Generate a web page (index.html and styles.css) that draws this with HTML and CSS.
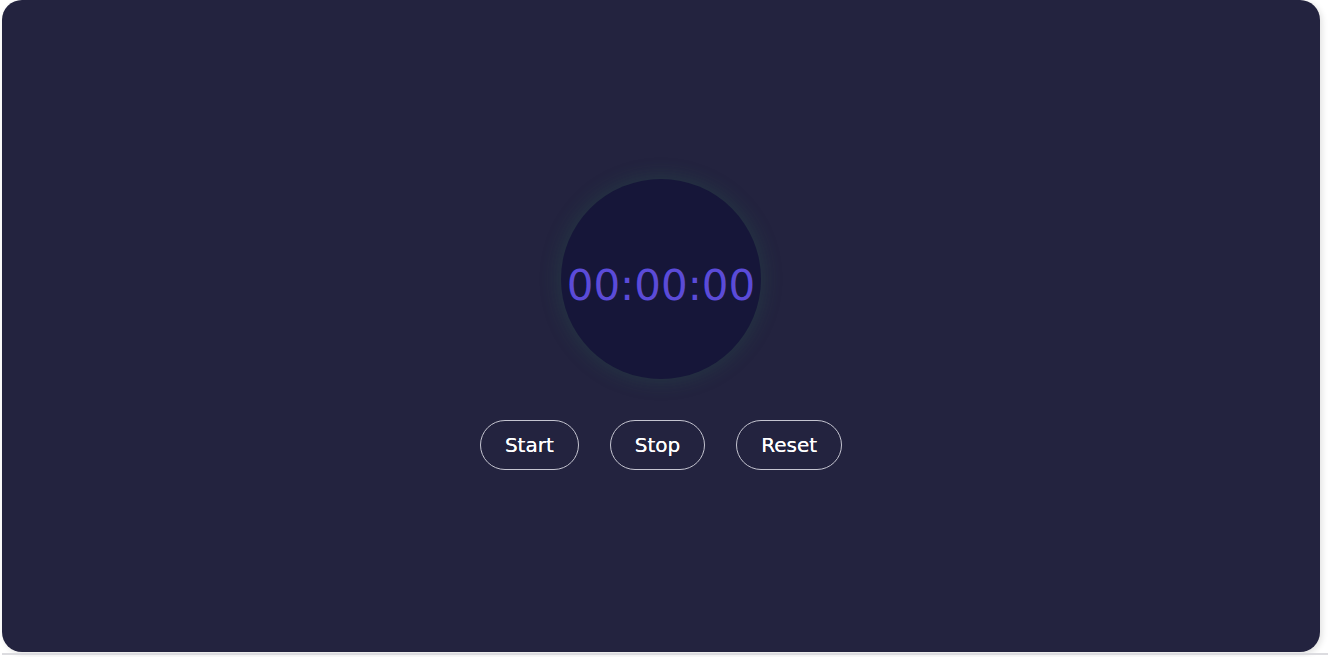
FILE: index.html
```html
<!DOCTYPE html>
<html>
<head>
<meta charset="utf-8">
<link rel="stylesheet" href="styles.css">
</head>
<body>
<div class="page">
  <main class="panel">
    <div class="clock">
      <span class="time">00:00:00</span>
    </div>
    <div class="controls">
      <button class="btn">Start</button>
      <button class="btn">Stop</button>
      <button class="btn">Reset</button>
    </div>
  </main>
  <div class="strip"></div>
</div>
</body>
</html>
```
FILE: styles.css
```css
html, body {
  margin: 0;
  padding: 0;
  background: #ffffff;
  overflow: hidden;
}
.page {
  width: 1328px;
  height: 657px;
  padding-left: 2px;
  box-sizing: border-box;
}
.panel {
  width: 1318px;
  height: 652px;
  box-sizing: border-box;
  padding-bottom: 4px;
  background: #23233f;
  border-radius: 20px;
  box-shadow: 2px 2px 6px rgba(0, 0, 0, 0.12);
  display: flex;
  flex-direction: column;
  align-items: center;
  justify-content: center;
  gap: 41px;
  font-family: "DejaVu Sans", Verdana, sans-serif;
}
.clock {
  width: 200px;
  height: 200px;
  border-radius: 50%;
  background: #161639;
  box-shadow: 0 0 18px 4px rgba(40, 110, 80, 0.22);
  display: flex;
  align-items: center;
  justify-content: center;
}
.time {
  color: #5b4bd8;
  font-size: 42px;
  line-height: 1;
  margin-top: 14px;
}
.controls {
  display: flex;
  gap: 31px;
}
.btn {
  height: 50px;
  padding: 0 24px;
  background: transparent;
  border: 1px solid #c4c4d0;
  border-radius: 25px;
  color: #ffffff;
  font-family: "DejaVu Sans", Verdana, sans-serif;
  font-size: 20px;
  text-shadow: 0 0 0.4px #ffffff;
}
.strip {
  height: 2px;
  margin-top: 1px;
  background: #dcdce0;
}
```
